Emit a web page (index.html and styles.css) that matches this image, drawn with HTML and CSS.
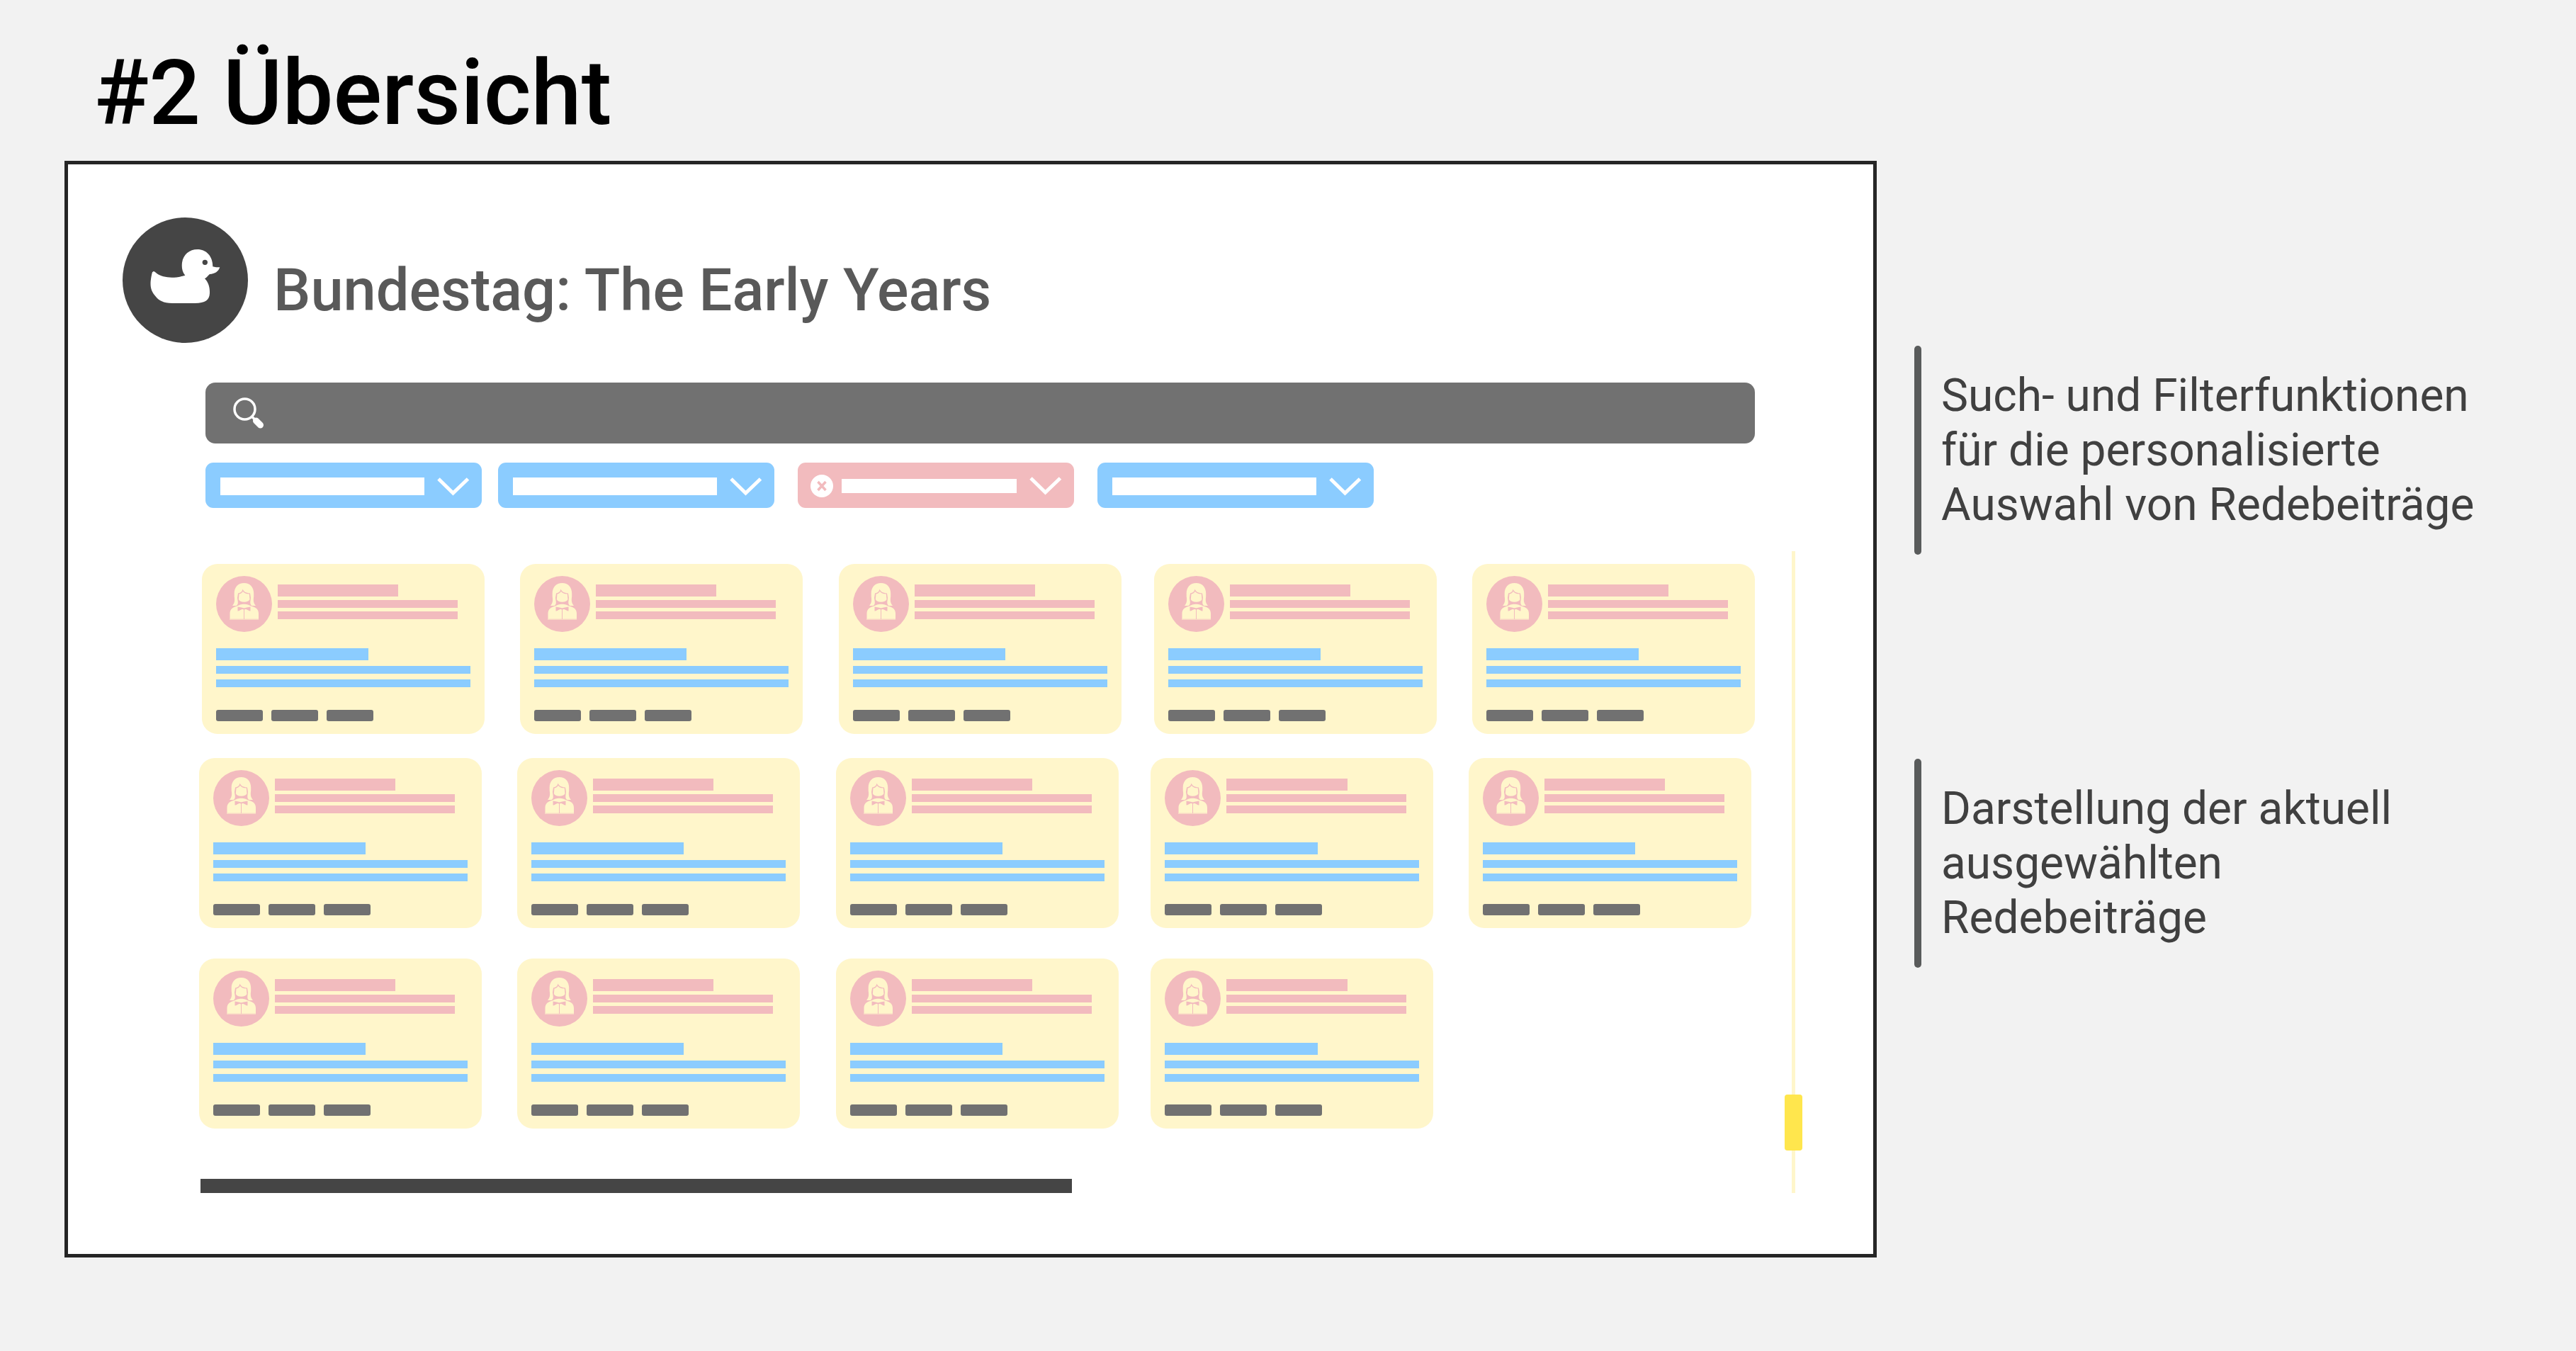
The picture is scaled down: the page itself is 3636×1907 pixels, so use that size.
FILE: index.html
```html
<!DOCTYPE html>
<html lang="de">
<head>
<meta charset="utf-8">
<meta name="viewport" content="width=device-width, initial-scale=1">
<title>#2 Übersicht</title>
<link rel="stylesheet" href="styles.css">
</head>
<body>
<svg class="sprite" aria-hidden="true">
  <symbol id="chevron" viewBox="0 0 46 26">
    <path d="M2 2 22.500 22 43.500 2" fill="none" stroke="currentColor" stroke-width="5"/>
  </symbol>
  <symbol id="person" viewBox="0 0 79 79">
    <circle cx="39.500" cy="39.500" r="39.500" fill="#f2bbbe"/>
    <g fill="#fff6cb">
      <path fill-rule="evenodd" d="M39.500 10C31 10 25.700 16 25.700 24.500V29C26.500 34 26.500 38 23 42H28.500C30.500 41 31 39 30.800 36.500L30 31 31 24.500C34.500 24 37 22 37.700 18.500 38.500 22 42 24 48 24.500L49 31 48.300 36.500C48 39.500 49 41 50.500 42H56C52.500 38 52.500 34 53.200 29V24.500C53.200 16 48 10 39.500 10Z"/>
      <path d="M32.500 25.500C35.500 25 37 23.500 37.800 21.500 39.500 24.500 43 25.200 46.800 25.500L47.500 33C46.500 35.500 43.500 36.800 39.500 36.800S33 35.500 31.800 33Z"/>
      <path d="M19.500 62V53C19.500 47 23.500 44 29.500 42.500L34 40.500C37 39.500 42 39.500 45 40.500L49.500 42.500C56 44 60 47 60 53V62Z"/>
    </g>
    <g fill="#f2bbbe">
      <path d="M30.500 43.500 37 44.800C38.500 45.500 40.500 45.500 42 44.800L48.500 43.500V49.500C46 49.500 44 47.500 42 46.800 40.500 47.500 38.500 47.500 37 46.800 35 47.500 33 49.500 30.500 49.500Z"/>
      <path d="M39 47H40V61H39ZM20 60.700H60V61.400H20Z"/>
    </g>
    <path d="M36.500 42.500H42.500L40.500 45H38.500Z" fill="#fff6cb"/>
  </symbol>
</svg>

<main class="page">
  <h1 class="page-title">#2 Übersicht</h1>

  <section class="screen">
    <header class="brand">
      <svg class="brand-logo" viewBox="0 0 177 177" aria-hidden="true">
        <circle cx="88.500" cy="88.500" r="88.500" fill="#454545"/>
        <g transform="translate(17 23) scale(.3333)">
          <path fill="#fff" d="M80 159C85 159 88 164 95 169C120 186 165 192 214 176C200 160 199 140 201 122C206 88 232 66 266 66C304 66 331 95 331 139C340 142 351 142 361 142C355 160 340 170 318 171C311 176 306 186 297 190C312 205 319 225 318 252C317 280 300 293 255 294H160C120 292 105 285 88 264C70 244 66 225 68 200C70 185 72 172 75 163Z"/>
          <circle cx="298" cy="121" r="11" fill="#454545"/>
        </g>
      </svg>
      <h2 class="brand-name">Bundestag: The Early Years</h2>
    </header>

    <form class="toolbar">
      <label class="search">
        <svg class="search-icon" viewBox="0 0 44 44" aria-hidden="true">
          <circle cx="16.500" cy="16.500" r="14.500" fill="none" stroke="#fff" stroke-width="3.500"/>
          <path d="M26.500 27 31 31.500" stroke="#fff" stroke-width="3.500"/>
          <path d="M32.500 33 38.500 39" stroke="#fff" stroke-width="9" stroke-linecap="round"/>
        </svg>
        <input class="search-input" type="search" aria-label="Suche">
      </label>
      <div class="filters">
        <div class="filter">
          <select class="filter-select" aria-label="Filter 1"></select>
          <svg class="filter-chevron" aria-hidden="true"><use href="#chevron"/></svg>
        </div>
        <div class="filter">
          <select class="filter-select" aria-label="Filter 2"></select>
          <svg class="filter-chevron" aria-hidden="true"><use href="#chevron"/></svg>
        </div>
        <div class="filter filter-active">
          <button class="filter-clear" type="button" aria-label="Filter entfernen">
            <svg viewBox="0 0 32 32" aria-hidden="true">
              <circle cx="16" cy="16" r="16" fill="#fff"/>
              <path d="M10.500 10 21.500 22M21.500 10 10.500 22" stroke="#f2bbbe" stroke-width="3.500"/>
            </svg>
          </button>
          <select class="filter-select" aria-label="Filter 3"></select>
          <svg class="filter-chevron" aria-hidden="true"><use href="#chevron"/></svg>
        </div>
        <div class="filter">
          <select class="filter-select" aria-label="Filter 4"></select>
          <svg class="filter-chevron" aria-hidden="true"><use href="#chevron"/></svg>
        </div>
      </div>
    </form>

    <div class="results">
      <div class="results-list">
        <div class="row row-first">
          <article class="card"><div class="speaker"><svg class="avatar"><use href="#person"/></svg><div class="speaker-lines"><i></i><i></i><i></i></div></div><div class="speech-lines"><i></i><i></i><i></i></div><div class="tags"><i></i><i></i><i></i></div></article>
          <article class="card"><div class="speaker"><svg class="avatar"><use href="#person"/></svg><div class="speaker-lines"><i></i><i></i><i></i></div></div><div class="speech-lines"><i></i><i></i><i></i></div><div class="tags"><i></i><i></i><i></i></div></article>
          <article class="card"><div class="speaker"><svg class="avatar"><use href="#person"/></svg><div class="speaker-lines"><i></i><i></i><i></i></div></div><div class="speech-lines"><i></i><i></i><i></i></div><div class="tags"><i></i><i></i><i></i></div></article>
          <article class="card"><div class="speaker"><svg class="avatar"><use href="#person"/></svg><div class="speaker-lines"><i></i><i></i><i></i></div></div><div class="speech-lines"><i></i><i></i><i></i></div><div class="tags"><i></i><i></i><i></i></div></article>
          <article class="card"><div class="speaker"><svg class="avatar"><use href="#person"/></svg><div class="speaker-lines"><i></i><i></i><i></i></div></div><div class="speech-lines"><i></i><i></i><i></i></div><div class="tags"><i></i><i></i><i></i></div></article>
        </div>
        <div class="row">
          <article class="card"><div class="speaker"><svg class="avatar"><use href="#person"/></svg><div class="speaker-lines"><i></i><i></i><i></i></div></div><div class="speech-lines"><i></i><i></i><i></i></div><div class="tags"><i></i><i></i><i></i></div></article>
          <article class="card"><div class="speaker"><svg class="avatar"><use href="#person"/></svg><div class="speaker-lines"><i></i><i></i><i></i></div></div><div class="speech-lines"><i></i><i></i><i></i></div><div class="tags"><i></i><i></i><i></i></div></article>
          <article class="card"><div class="speaker"><svg class="avatar"><use href="#person"/></svg><div class="speaker-lines"><i></i><i></i><i></i></div></div><div class="speech-lines"><i></i><i></i><i></i></div><div class="tags"><i></i><i></i><i></i></div></article>
          <article class="card"><div class="speaker"><svg class="avatar"><use href="#person"/></svg><div class="speaker-lines"><i></i><i></i><i></i></div></div><div class="speech-lines"><i></i><i></i><i></i></div><div class="tags"><i></i><i></i><i></i></div></article>
          <article class="card"><div class="speaker"><svg class="avatar"><use href="#person"/></svg><div class="speaker-lines"><i></i><i></i><i></i></div></div><div class="speech-lines"><i></i><i></i><i></i></div><div class="tags"><i></i><i></i><i></i></div></article>
        </div>
        <div class="row row-last">
          <article class="card"><div class="speaker"><svg class="avatar"><use href="#person"/></svg><div class="speaker-lines"><i></i><i></i><i></i></div></div><div class="speech-lines"><i></i><i></i><i></i></div><div class="tags"><i></i><i></i><i></i></div></article>
          <article class="card"><div class="speaker"><svg class="avatar"><use href="#person"/></svg><div class="speaker-lines"><i></i><i></i><i></i></div></div><div class="speech-lines"><i></i><i></i><i></i></div><div class="tags"><i></i><i></i><i></i></div></article>
          <article class="card"><div class="speaker"><svg class="avatar"><use href="#person"/></svg><div class="speaker-lines"><i></i><i></i><i></i></div></div><div class="speech-lines"><i></i><i></i><i></i></div><div class="tags"><i></i><i></i><i></i></div></article>
          <article class="card"><div class="speaker"><svg class="avatar"><use href="#person"/></svg><div class="speaker-lines"><i></i><i></i><i></i></div></div><div class="speech-lines"><i></i><i></i><i></i></div><div class="tags"><i></i><i></i><i></i></div></article>
        </div>
        <div class="status"></div>
      </div>
      <input class="scroller" type="range" min="0" max="827" value="767" aria-label="Scrollposition">
    </div>
  </section>

  <aside class="notes">
    <p class="note">Such- und Filterfunktionen für die personalisierte Auswahl von Redebeiträge</p>
    <p class="note">Darstellung der aktuell ausgewählten Redebeiträge</p>
  </aside>
</main>
</body>
</html>
```

FILE: styles.css
```css
:root {
  --paper: #f2f2f2;
  --ink: #262626;
  --dark: #454545;
  --grey: #717171;
  --blue: #8bccff;
  --pink: #f2bbbe;
  --cream: #fff6cb;
  --yellow: #ffe64d;
}

* {
  box-sizing: border-box;
}

body {
  margin: 0;
  background: var(--paper);
  font-family: Roboto, "Liberation Sans", sans-serif;
}

.sprite {
  display: none;
}

.page {
  display: grid;
  grid-template-columns: minmax(0, 2558fr) minmax(0, 807fr);
  column-gap: 53px;
  align-items: start;
  padding: 56px 127px 132px 91px;
}

.page-title {
  grid-column: 1 / -1;
  margin: 0 0 21px;
  padding-left: 42px;
  font-size: 128px;
  line-height: 150px;
  font-weight: 500;
  color: #000;
}

/* Framed application screen */

.screen {
  padding: 75px 0 86px;
  border: 5px solid var(--ink);
  background: #fff;
}

.brand {
  display: flex;
  align-items: flex-end;
  gap: 36px;
  padding-left: 77px;
}

.brand-logo {
  flex: none;
  width: 177px;
  height: 177px;
}

.brand-name {
  margin: 0 0 26px;
  font-size: 83px;
  line-height: 96px;
  font-weight: 500;
  color: #595959;
}

.toolbar {
  padding: 56px 167px 0 194px;
}

.search {
  display: flex;
  align-items: center;
  gap: 24px;
  height: 86px;
  padding: 0 39px;
  border-radius: 14px;
  background: var(--grey);
}

.search-icon {
  flex: none;
  width: 44px;
  height: 44px;
}

.search-input {
  flex: 1;
  height: 60px;
  padding: 0;
  border: 0;
  outline: 0;
  background: transparent;
  color: #fff;
  font: inherit;
  font-size: 40px;
}

.filters {
  display: flex;
  gap: 23px;
  margin-top: 27px;
}

.filter {
  display: flex;
  align-items: center;
  gap: 18px;
  width: 390px;
  height: 64px;
  padding: 21px 17px 18px 21px;
  border-radius: 11px;
  background: var(--blue);
}

.filter-select {
  appearance: none;
  flex: 1;
  min-width: 0;
  height: 25px;
  padding: 0;
  border: 0;
  border-radius: 0;
  background: #fff;
}

.filter-chevron {
  flex: none;
  width: 46px;
  height: 26px;
  color: #fff;
}

.filter-active {
  gap: 12px;
  margin: 0 10px;
  padding: 20px 17px 18px 18px;
  background: var(--pink);
}

.filter-active .filter-select {
  height: 20px;
  margin-right: 6px;
}

.filter-clear {
  flex: none;
  display: flex;
  width: 32px;
  height: 32px;
  padding: 0;
  border: 0;
  background: none;
}

/* Result cards */

.results {
  display: flex;
  gap: 42px;
  padding: 61px 100px 0 185px;
}

.results-list {
  flex: 1;
  min-width: 0;
  padding-top: 18px;
}

.row {
  display: grid;
  grid-template-columns: 449fr 450fr 445fr 449fr 399fr;
  margin-top: 34px;
  padding-right: 5px;
}

.row-first {
  margin-top: 0;
  padding: 0 0 0 4px;
}

.row-last {
  margin-top: 43px;
}

.card {
  max-width: 399px;
  padding: 17px 20px 18px;
  border-radius: 22px;
  background: var(--cream);
}

.card i {
  display: block;
}

.speaker {
  display: flex;
  gap: 8px;
}

.avatar {
  flex: none;
  width: 79px;
  height: 79px;
}

.speaker-lines {
  flex: 1;
  display: grid;
  grid-template-rows: 17px 11px 11px;
  row-gap: 5px;
  padding: 12px 18px 0 0;
}

.speaker-lines i {
  background: var(--pink);
}

.speaker-lines i:first-child {
  width: 67%;
}

.speech-lines {
  display: grid;
  grid-template-rows: 17px 11px 11px;
  row-gap: 8px;
  margin-top: 23px;
}

.speech-lines i {
  background: var(--blue);
}

.speech-lines i:first-child {
  width: 60%;
}

.tags {
  display: flex;
  gap: 12px;
  margin-top: 32px;
}

.tags i {
  width: 66px;
  height: 16px;
  border-radius: 3px;
  background: var(--grey);
}

.status {
  width: 56%;
  height: 20px;
  margin: 71px 0 0 2px;
  background: var(--dark);
}

.scroller {
  appearance: none;
  writing-mode: vertical-lr;
  flex: none;
  width: 25px;
  height: auto;
  margin: 0;
  background: linear-gradient(var(--cream), var(--cream)) center / 5px 100% no-repeat;
}

.scroller::-webkit-slider-thumb {
  appearance: none;
  width: 25px;
  height: 79px;
  border-radius: 4px;
  background: var(--yellow);
}

/* Margin notes */

.notes {
  display: grid;
  gap: 288px;
  padding-top: 261px;
}

.note {
  display: flex;
  align-items: center;
  gap: 28px;
  min-height: 295px;
  margin: 0;
  font-size: 64px;
  line-height: 77px;
  color: #404040;
}

.note::before {
  content: "";
  flex: none;
  align-self: stretch;
  width: 10px;
  border-radius: 5px;
  background: #595b5b;
}
```
